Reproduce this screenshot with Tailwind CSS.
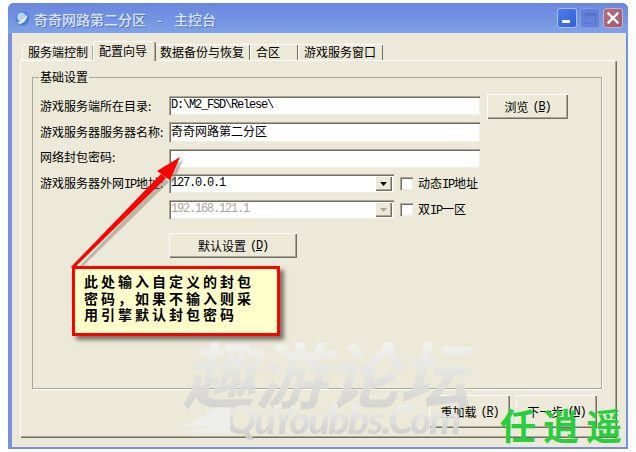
<!DOCTYPE html>
<html lang="zh">
<head>
<meta charset="utf-8">
<script src="https://cdn.jsdelivr.net/npm/@tailwindcss/browser@4"></script>
</head>
<body class="bg-white">
<div class="relative w-[636px] h-[452px] overflow-hidden bg-white pl-[8px] pt-[3px] font-['Noto_Sans_CJK_SC','Noto_Sans',sans-serif] text-[12px] leading-[14px] text-black">
  <!-- window -->
  <div class="w-[620px] h-[446px] flex flex-col rounded-t-[6px] bg-[#7a90df]">
    <!-- title bar -->
    <div class="h-[30px] shrink-0 flex items-center pl-[7px] pr-[5px] rounded-t-[6px] bg-gradient-to-b from-[#6a86de] via-[#7393e2] to-[#7da3e9]">
      <svg class="w-[15px] h-[15px] shrink-0" viewBox="0 0 15 15">
        <circle cx="7.5" cy="7.5" r="7" fill="#4a7fd6"/>
        <circle cx="6.5" cy="6" r="4.5" fill="#b5d2f3"/>
        <path d="M2 11.5 C5.5 11 9.5 8 12.5 3.5 C12 8.5 8.5 12.5 4.5 13 Z" fill="#f2f7fd"/>
      </svg>
      <div class="ml-[4px] mt-[1px] flex text-[14px] font-medium text-[#d9e3f6] whitespace-nowrap [text-shadow:1px_1px_0_#5672c8]">
        <span>奇奇网路第二分区</span><span class="ml-[11px]">-</span><span class="ml-[12px]">主控台</span>
      </div>
      <div class="ml-auto flex gap-[3px] items-center">
        <div class="relative w-[20px] h-[20px] rounded-[3px] border border-[#a9c0f4] bg-gradient-to-br from-[#4f7df0] to-[#2f5fd8]">
          <div class="absolute left-[4px] bottom-[4px] w-[8px] h-[3px] bg-white"></div>
        </div>
        <div class="relative w-[20px] h-[20px] rounded-[3px] border border-[#7e98e6] bg-[#6480d8]">
          <div class="absolute left-[4px] top-[4px] w-[11px] h-[11px] border border-[#5873cc] border-t-[3px]"></div>
        </div>
        <div class="w-[20px] h-[20px] rounded-[3px] border border-[#c7b0c4] bg-gradient-to-br from-[#b8707c] to-[#a05a72] flex items-center justify-center">
          <svg class="w-[12px] h-[12px]" viewBox="0 0 12 12"><path d="M1.5 1.5 L10.5 10.5 M10.5 1.5 L1.5 10.5" stroke="#fff" stroke-width="2.4" stroke-linecap="square"/></svg>
        </div>
      </div>
    </div>
    <!-- client -->
    <div class="flex-1 ml-[4px] mr-[2px] mb-[2px] bg-[#ece9d8] pl-[8px] pr-[9px] pt-[8px] pb-[9px] flex flex-col">
      <!-- tabs -->
      <div class="h-[19px] shrink-0 flex items-end relative z-10">
        <div class="ml-[2px] w-[71px] h-[16px] pl-[5px] border-t border-l border-white rounded-t-[2px] shadow-[inset_-1px_0_0_#aca899]">服务端控制</div>
        <div class="w-[63px] h-[20px] -mb-[1px] pl-[5px] pt-[2px] border-t border-l border-white rounded-t-[2px] bg-[#ece9d8] shadow-[inset_-1px_0_0_#716f64,inset_-2px_0_0_#aca899]">配置向导</div>
        <div class="w-[94px] h-[16px] pl-[4px] border-t border-white shadow-[inset_-1px_0_0_#716f64]">数据备份与恢复</div>
        <div class="w-[48px] h-[16px] pl-[5px] border-t border-l border-white shadow-[inset_-1px_0_0_#716f64]">合区</div>
        <div class="w-[85px] h-[16px] pl-[5px] border-t border-l border-white shadow-[inset_-1px_0_0_#716f64]">游戏服务窗口</div>
      </div>
      <!-- tab panel -->
      <div class="flex-1 border-t border-l border-white shadow-[inset_-1px_-1px_0_#716f64,inset_-2px_-2px_0_#aca899] pl-[11px] pr-[15px] pt-[16px] pb-[49px] flex flex-col">
        <!-- group -->
        <div class="flex-1 border border-[#aca899] shadow-[1px_1px_0_#fff] pl-[7px] flex flex-col">
          <div class="-mt-[8px] w-fit -ml-[1px] px-[1px] bg-[#ece9d8] h-[14px]">基础设置</div>
          <!-- rows -->
          <div class="mt-[12px] h-[19px] flex items-start">
            <div class="w-[129px] pt-[3px]">游戏服务端所在目录:</div>
            <div class="w-[311px] h-[19px] bg-white pl-[2px] pt-[2px] tracking-[-1.2px] shadow-[inset_1px_1px_0_#aca899,inset_2px_2px_0_#716f64,inset_-1px_-1px_0_#f1efe2] font-['Liberation_Mono']">D:\M2_FSD\Relese\</div>
            <div class="ml-[7px] -mt-[2px] w-[81px] h-[25px] flex items-center justify-center shadow-[inset_1px_1px_0_#fff,inset_-1px_-1px_0_#716f64,inset_-2px_-2px_0_#aca899]">浏览 <span class="ml-[4px] font-['Liberation_Mono'] tracking-[-1.2px]">(<span class="underline">B</span>)</span></div>
          </div>
          <div class="mt-[7px] h-[20px] flex items-start">
            <div class="w-[129px] pt-[3px] whitespace-nowrap">游戏服务器服务器名称:</div>
            <div class="w-[311px] h-[20px] bg-white pl-[2px] pt-[2px] shadow-[inset_1px_1px_0_#aca899,inset_2px_2px_0_#716f64,inset_-1px_-1px_0_#f1efe2]">奇奇网路第二分区</div>
          </div>
          <div class="mt-[7px] h-[19px] flex items-start">
            <div class="w-[129px] pt-[1px]">网络封包密码:</div>
            <div class="w-[311px] h-[19px] bg-white shadow-[inset_1px_1px_0_#aca899,inset_2px_2px_0_#716f64,inset_-1px_-1px_0_#f1efe2]"></div>
          </div>
          <div class="mt-[6px] h-[19px] flex items-start">
            <div class="w-[129px] pt-[2px] whitespace-nowrap">游戏服务器外网<span class="font-['Liberation_Mono'] tracking-[-1.2px]">IP</span>地址:</div>
            <div class="relative w-[225px] h-[19px] bg-white pl-[2px] pt-[2px] font-['Liberation_Mono'] tracking-[-1.2px] shadow-[inset_1px_1px_0_#aca899,inset_2px_2px_0_#716f64,inset_-1px_-1px_0_#f1efe2]">127.0.0.1
              <div class="absolute right-[2px] top-[2px] w-[17px] h-[15px] bg-[#ece9d8] flex items-center justify-center shadow-[inset_1px_1px_0_#fff,inset_-1px_-1px_0_#716f64,inset_-2px_-2px_0_#aca899]">
                <svg class="w-[7px] h-[4px]" viewBox="0 0 7 4"><path d="M0 0 H7 L3.5 4 Z" fill="#000"/></svg>
              </div>
            </div>
            <div class="ml-[6px] mt-[3px] w-[13px] h-[13px] bg-white shadow-[inset_1px_1px_0_#aca899,inset_2px_2px_0_#716f64,inset_-1px_-1px_0_#f1efe2]"></div>
            <div class="ml-[5px] pt-[2px] whitespace-nowrap">动态<span class="font-['Liberation_Mono'] tracking-[-1.2px]">IP</span>地址</div>
          </div>
          <div class="mt-[7px] h-[19px] flex items-start">
            <div class="w-[129px]"></div>
            <div class="relative w-[225px] h-[19px] bg-white pl-[2px] pt-[2px] font-['Liberation_Mono'] tracking-[-1.2px] text-[#aca899] shadow-[inset_1px_1px_0_#aca899,inset_2px_2px_0_#716f64,inset_-1px_-1px_0_#f1efe2]">192.168.121.1
              <div class="absolute right-[2px] top-[2px] w-[17px] h-[15px] bg-[#ece9d8] flex items-center justify-center shadow-[inset_1px_1px_0_#fff,inset_-1px_-1px_0_#716f64,inset_-2px_-2px_0_#aca899]">
                <svg class="w-[7px] h-[4px]" viewBox="0 0 7 4"><path d="M0 0 H7 L3.5 4 Z" fill="#aca899"/></svg>
              </div>
            </div>
            <div class="ml-[6px] mt-[3px] w-[13px] h-[13px] bg-white shadow-[inset_1px_1px_0_#aca899,inset_2px_2px_0_#716f64,inset_-1px_-1px_0_#f1efe2]"></div>
            <div class="ml-[5px] pt-[2px] whitespace-nowrap">双<span class="font-['Liberation_Mono'] tracking-[-1.2px]">IP</span>一区</div>
          </div>
          <div class="mt-[14px] ml-[129px] w-[128px] h-[25px] flex items-center justify-center shadow-[inset_1px_1px_0_#fff,inset_-1px_-1px_0_#716f64,inset_-2px_-2px_0_#aca899]">默认设置 <span class="ml-[4px] font-['Liberation_Mono'] tracking-[-1.2px]">(<span class="underline">D</span>)</span></div>
        </div>
      </div>
    </div>
  </div>

  <!-- bottom buttons, over the tab panel -->
  <div class="absolute left-[429px] top-[395px] w-[81px] h-[33px] flex items-center justify-center shadow-[inset_1px_1px_0_#fff,inset_-1px_-1px_0_#716f64,inset_-2px_-2px_0_#aca899] bg-[#ece9d8]">重加载 <span class="ml-[4px] font-['Liberation_Mono'] tracking-[-1.2px]">(<span class="underline">R</span>)</span></div>
  <div class="absolute left-[516px] top-[395px] w-[81px] h-[33px] flex items-center justify-center shadow-[inset_1px_1px_0_#fff,inset_-1px_-1px_0_#716f64,inset_-2px_-2px_0_#aca899] bg-[#ece9d8]">下一步 <span class="ml-[4px] font-['Liberation_Mono'] tracking-[-1.2px]">(<span class="underline">N</span>)</span></div>

  <!-- watermark -->
  <div class="absolute left-[183px] top-[328px] text-[72px] leading-[88px] font-bold italic whitespace-nowrap text-transparent bg-clip-text bg-gradient-to-b from-[#fbfbfa] to-[#cdcdcb] opacity-90">趣游论坛</div>
  <div class="absolute left-[226px] top-[396px] text-[40px] leading-[46px] tracking-[-2px] font-['Lato'] font-black italic whitespace-nowrap text-transparent bg-clip-text bg-gradient-to-b from-[#f8f8f8] to-[#c6c6c4] opacity-95">QuYoubbs.Com</div>
  <svg class="absolute left-[174px] top-[404px] w-[60px] h-[34px]" viewBox="0 0 60 34">
    <path d="M0 22 C15 20 25 16 34 8 C40 3 48 2 56 4 L56 30 C42 28 24 30 10 26 C22 26 30 24 34 22 C24 22 12 24 0 22 Z" fill="#eeeeec" opacity="0.9"/>
  </svg>

  <!-- arrow -->
  <svg class="absolute left-0 top-0 w-[636px] h-[452px] pointer-events-none" viewBox="0 0 636 452">
    <path d="M75 271 L77 272 L169 182 L164 178 Z M183 160 L160 174 L173 183 Z" fill="#8a8678" fill-opacity="0.5"/>
    <path d="M71 267 L73 269 L166 178 L161 174 Z M180 157 L157 171 L170 180 Z" fill="#ff0000"/>
  </svg>

  <!-- callout -->
  <div class="absolute left-[72px] top-[266px] w-[208px] h-[70px] border-[3px] border-[#ff0000] bg-[#ffffcc] shadow-[4px_4px_4px_#77766b] pl-[9px] pt-[4px] text-[14px] leading-[16.5px] font-bold tracking-[3px] whitespace-nowrap">此处输入自定义的封包<br>密码&#65292;如果不输入则采<br>用引擎默认封包密码</div>

  <!-- signature -->
  <div class="absolute left-[500px] top-[402px] text-[36px] leading-[44px] font-bold tracking-[7px] whitespace-nowrap text-[#27cf3c]">任逍遥</div>
</div>
</body>
</html>
